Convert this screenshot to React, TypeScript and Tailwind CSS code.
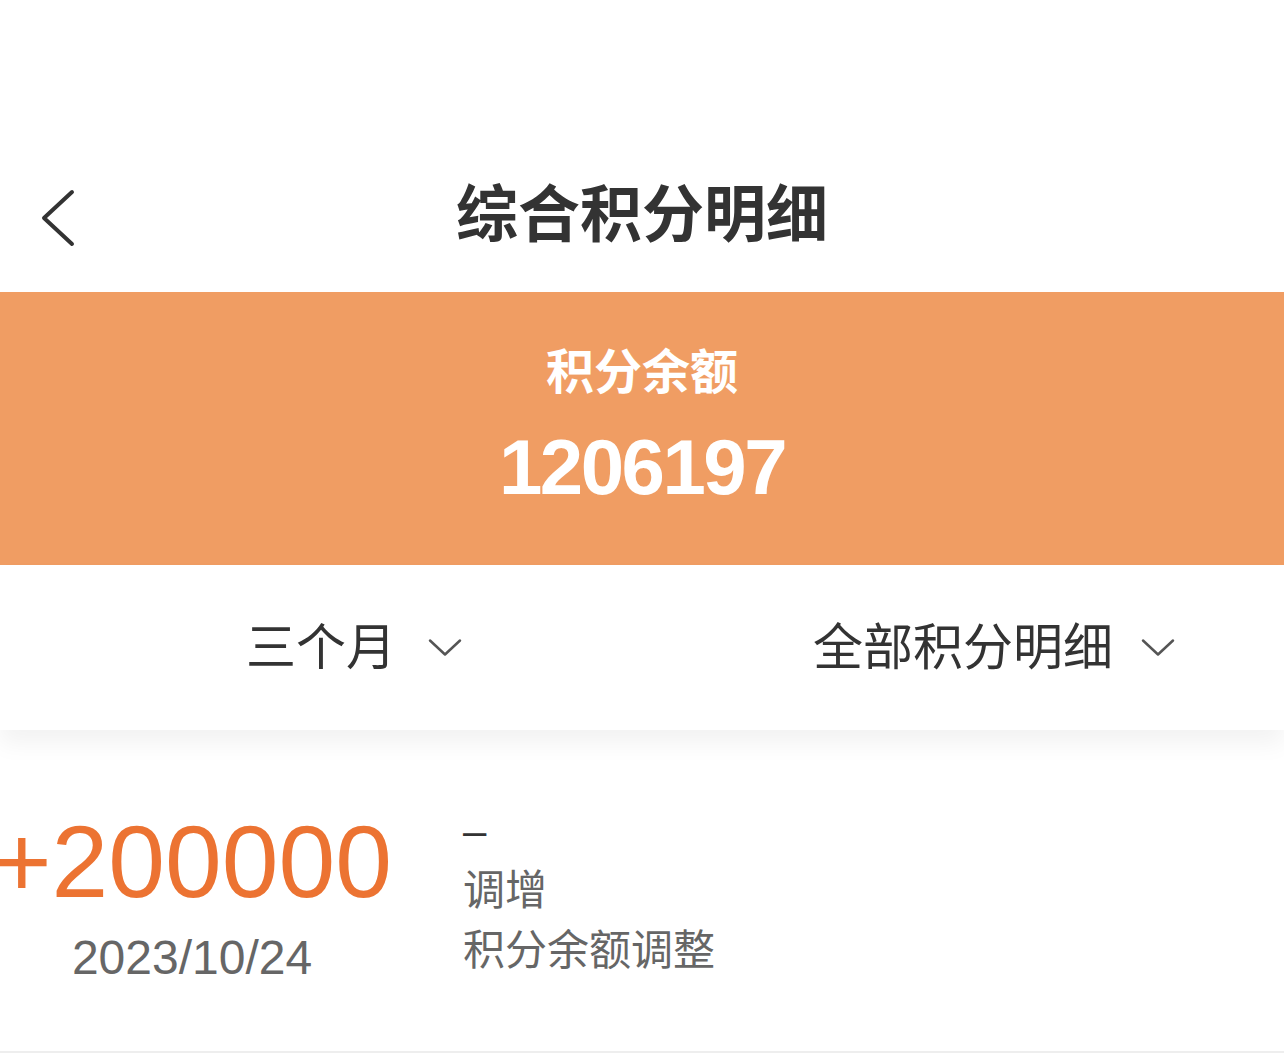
import React from 'react';

const font = { fontFamily: '"Liberation Sans", "Noto Sans CJK SC", sans-serif' };

function BackIcon() {
    return (
        <svg width="36" height="60" viewBox="0 0 36 60" fill="none">
            <path d="M32 4 L4 30 L32 56" stroke="#333" strokeWidth="4" strokeLinecap="round" strokeLinejoin="round" />
        </svg>
    );
}

function DownIcon() {
    return (
        <svg width="34" height="19" viewBox="0 0 34 19" fill="none">
            <path d="M2 2 L17 16 L32 2" stroke="#555" strokeWidth="2.5" strokeLinecap="round" strokeLinejoin="round" />
        </svg>
    );
}

function Filter({ label, gap }: { label: string; gap: string }) {
    return (
        <div className="flex justify-center">
            <span className="relative text-[50px] leading-[60px] text-[#333]">
                {label}
                <span className={`absolute left-full top-1/2 -translate-y-1/2 ${gap}`}>
                    <DownIcon />
                </span>
            </span>
        </div>
    );
}

export default function App() {
    return (
        <main className="w-[1284px] h-[1064px] bg-white overflow-hidden" style={font}>
            {/* header */}
            <div className="h-[140px]" />
            <div className="grid grid-cols-[1fr_auto_1fr] items-center h-[152px]">
                <div className="pl-[40px] pt-[4px]">
                    <BackIcon />
                </div>
                <h1 className="text-[62px] leading-[62px] font-bold text-[#333]">综合积分明细</h1>
                <div />
            </div>

            {/* balance */}
            <div className="h-[273px] bg-[#F09D63] flex flex-col items-center text-white">
                <div className="mt-[57px] text-[48px] leading-[48px] font-bold">积分余额</div>
                <div className="mt-[31px] text-[78px] leading-none font-bold tracking-[-2.5px]">1206197</div>
            </div>

            {/* filters */}
            <div className="relative z-10 h-[165px] bg-white grid grid-cols-2 items-center shadow-[0_14px_22px_rgba(0,0,0,0.05)]">
                <Filter label="三个月" gap="ml-[32px]" />
                <Filter label="全部积分明细" gap="ml-[28px]" />
            </div>

            {/* record */}
            <div className="h-[323px] flex items-start border-b-2 border-[#eeeeee]">
                <div className="w-[384px] mt-[81px] flex flex-col items-center whitespace-nowrap">
                    <div className="text-[102px] leading-none text-[#EC7332]">+200000</div>
                    <div className="mt-[21px] text-[48px] leading-none text-[#666]">2023/10/24</div>
                </div>
                <div className="ml-[79px] mt-[71px] text-[42px] leading-[60px] text-[#666]">
                    <div className="text-[#333]">–</div>
                    <div>调增</div>
                    <div>积分余额调整</div>
                </div>
            </div>
        </main>
    );
}
